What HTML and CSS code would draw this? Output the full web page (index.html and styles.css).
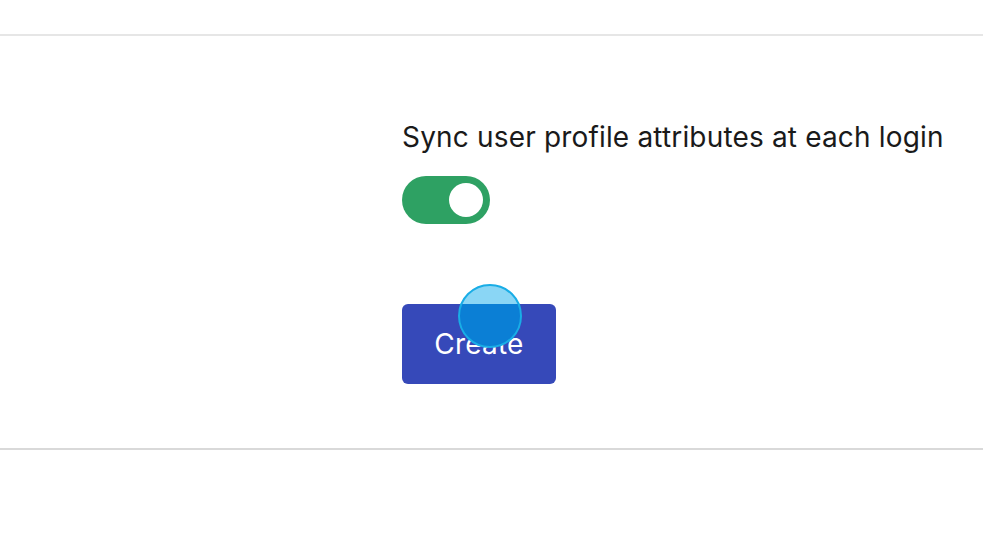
FILE: index.html
```html
<!DOCTYPE html>
<html lang="en">
<head>
  <meta charset="UTF-8" />
  <meta name="viewport" content="width=device-width, initial-scale=1.0"/>
  <title>Create connection</title>
  <link rel="stylesheet" href="styles.css">
</head>
<body>

  <div class="topbar"></div>

  <div class="form">
    <label class="field-label" for="syncToggle">Sync user profile attributes at each login</label>
    <div class="toggle on" id="syncToggle">
      <span class="knob"></span>
    </div>

    <div class="actions">
      <button class="button primary">Create</button>
      <span class="cursor"></span>
    </div>
  </div>

</body>
</html>
```

FILE: styles.css
```css
* { box-sizing: border-box; margin: 0; padding: 0; }
body {
  font-family: Inter, "Noto Sans", Arial, sans-serif;
  background-color: #fff;
  color: #1a1a1a;
}
.topbar {
  height: 36px;
  border-bottom: 2px solid #e6e6e6;
}
.form {
  padding: 84px 0 64px 402px;
  border-bottom: 2px solid #d9d9d9;
}
.field-label {
  display: block;
  font-size: 28px;
  line-height: 34px;
  letter-spacing: 0.17px;
  color: #1a1a1a;
}
.toggle {
  width: 88px;
  height: 48px;
  margin-top: 22px;
  border-radius: 24px;
  background-color: #ccc;
  display: flex;
  align-items: center;
  padding: 0 7px;
}
.toggle.on {
  background-color: #2ea163;
  justify-content: flex-end;
}
.knob {
  width: 34px;
  height: 34px;
  border-radius: 50%;
  background-color: #fff;
}
.actions {
  position: relative;
  margin-top: 80px;
  width: 154px;
}
.button {
  display: block;
  width: 154px;
  height: 80px;
  border: none;
  border-radius: 6px;
  font-family: inherit;
  font-size: 28px;
  letter-spacing: 0.2px;
  color: #fff;
  cursor: pointer;
}
.primary {
  background-color: #3649b9;
}
.cursor {
  position: absolute;
  left: 56px;
  top: -20px;
  width: 64px;
  height: 64px;
  border-radius: 50%;
  border: 2px solid #19ade6;
  background: linear-gradient(to bottom, #8ad6f5 0, #8ad6f5 18px, #0b7fd5 18px);
}
```
